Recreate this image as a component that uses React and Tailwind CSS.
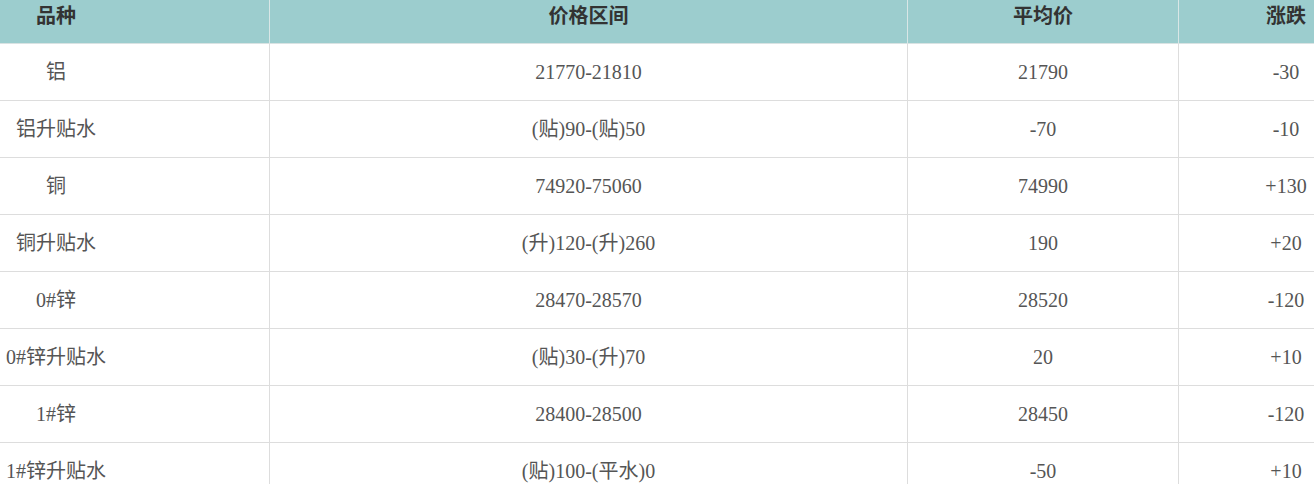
const rows = [
  ["铝", "21770-21810", "21790", "-30"],
  ["铝升贴水", "(贴)90-(贴)50", "-70", "-10"],
  ["铜", "74920-75060", "74990", "+130"],
  ["铜升贴水", "(升)120-(升)260", "190", "+20"],
  ["0#锌", "28470-28570", "28520", "-120"],
  ["0#锌升贴水", "(贴)30-(升)70", "20", "+10"],
  ["1#锌", "28400-28500", "28450", "-120"],
  ["1#锌升贴水", "(贴)100-(平水)0", "-50", "+10"],
];

const cols = "grid grid-cols-[270px_638px_271px_135px]";

const App = () => {
  return (
    <div
      className="w-[1314px] h-[484px] overflow-hidden bg-white text-[20px]"
      style={{ fontFamily: '"Liberation Serif", "Noto Sans CJK SC", serif' }}
    >
      <div className={`${cols} h-[44px] bg-[#9ccdce] border-b border-[#d9e3e3] font-bold text-[#333] leading-[22px]`}>
        <div className="pr-[157px] pt-[5px] text-center border-r border-[#d9e6e6]">品种</div>
        <div className="pt-[5px] text-center border-r border-[#d9e6e6]">价格区间</div>
        <div className="pt-[5px] text-center border-r border-[#d9e6e6]">平均价</div>
        <div className="pl-[79px] pt-[5px] text-center whitespace-nowrap">涨跌</div>
      </div>
      {rows.map((r, i) => (
        <div key={i} className={`${cols} h-[57px] border-b border-[#ddd] text-[#555] leading-[22px]`}>
          <div className="pr-[157px] flex items-center justify-center border-r border-[#ddd] whitespace-nowrap">{r[0]}</div>
          <div className="flex items-center justify-center border-r border-[#ddd]">{r[1]}</div>
          <div className="flex items-center justify-center border-r border-[#ddd]">{r[2]}</div>
          <div className="pl-[79px] flex items-center justify-center whitespace-nowrap">{r[3]}</div>
        </div>
      ))}
    </div>
  );
};

export default App;
